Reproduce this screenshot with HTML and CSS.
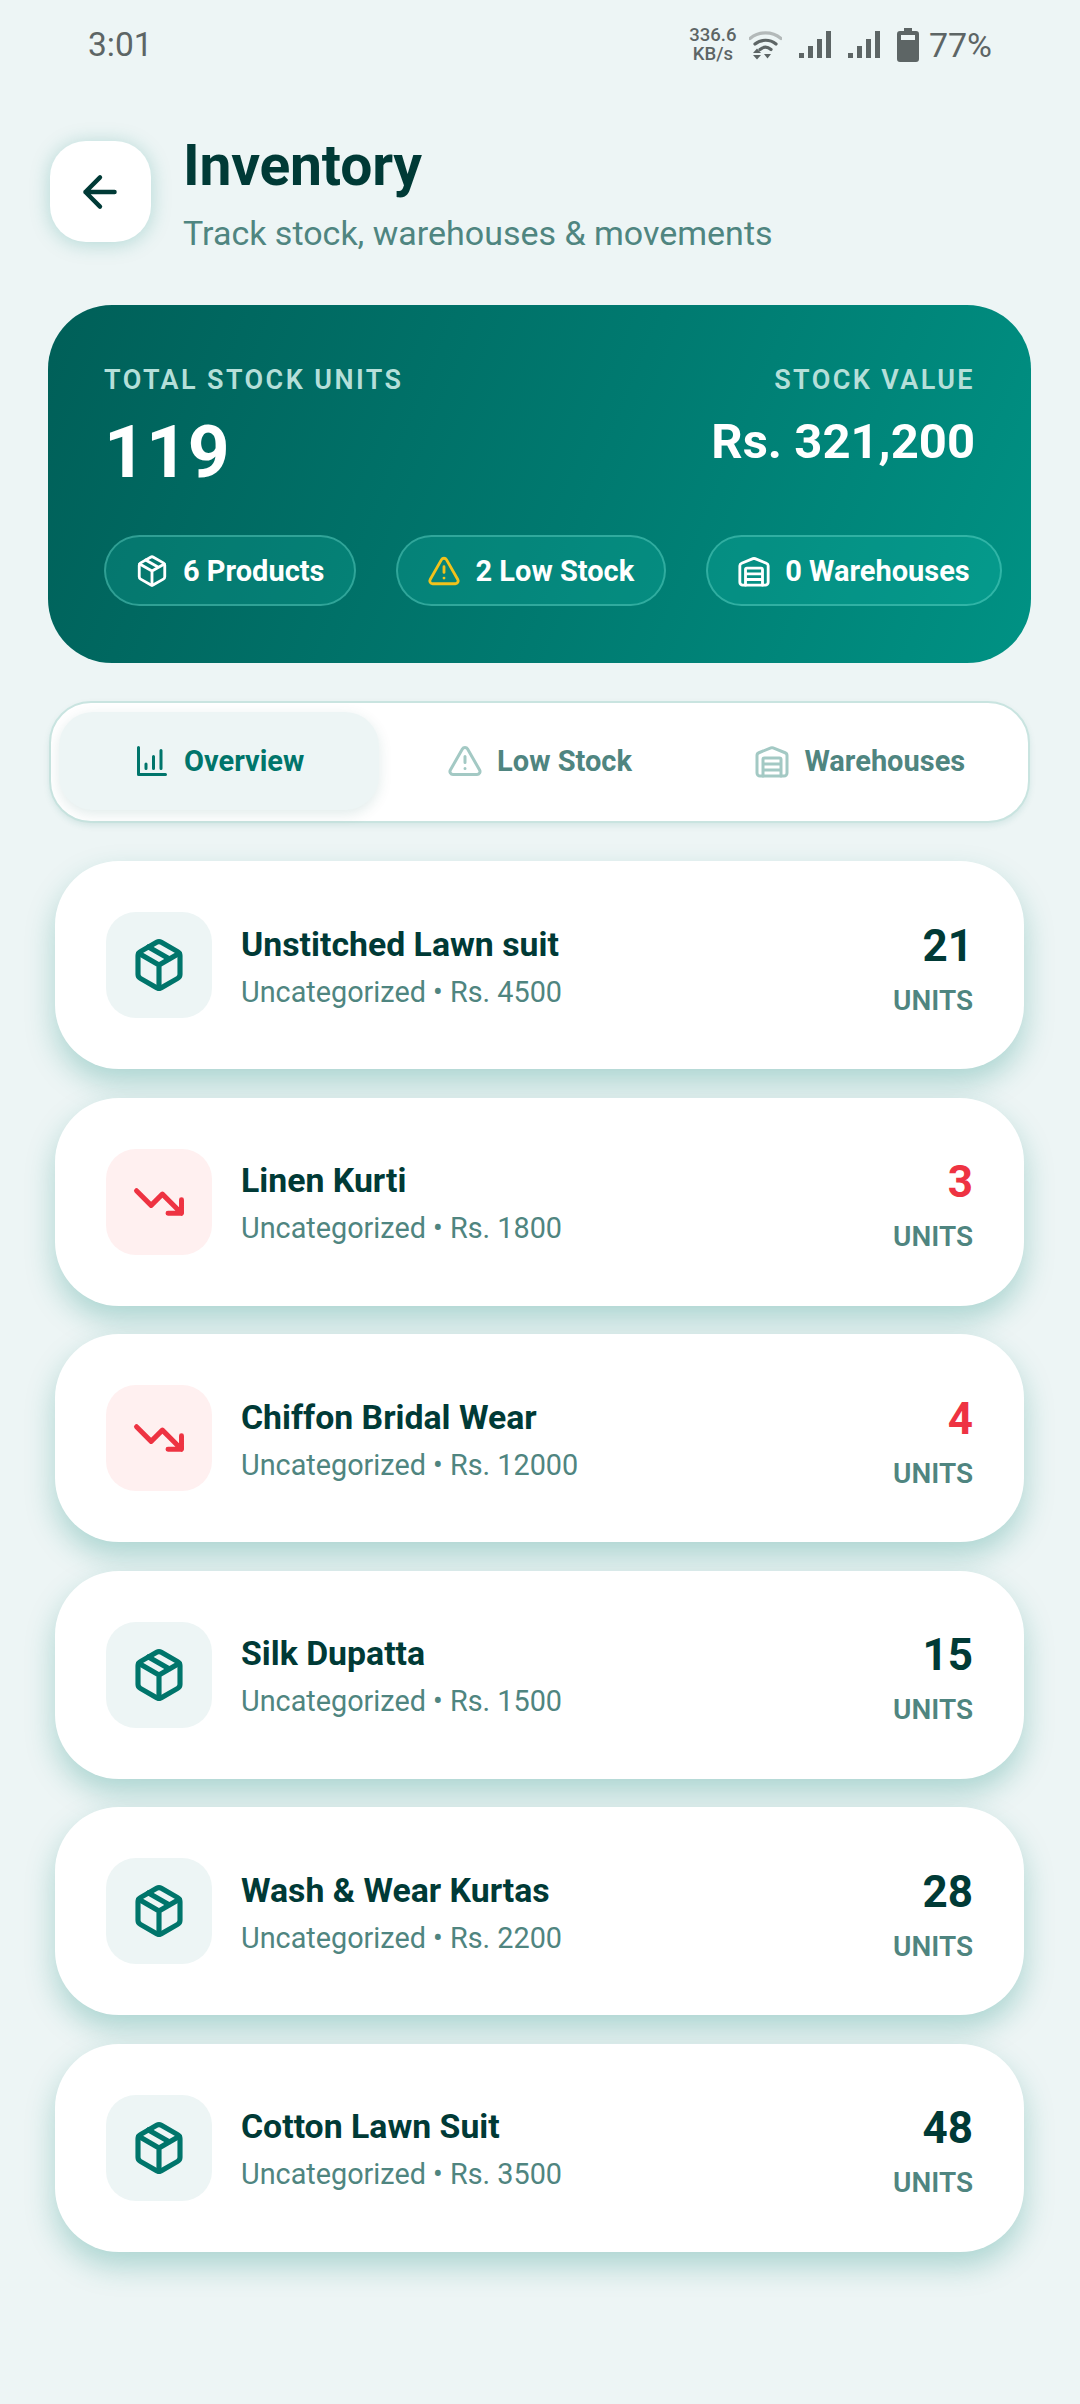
FILE: index.html
```html
<!DOCTYPE html>
<html lang="en">
<head>
<meta charset="utf-8">
<title>Inventory</title>
<link rel="stylesheet" href="styles.css">
</head>
<body>
<svg class="defs" width="0" height="0" aria-hidden="true">
  <symbol id="box" viewBox="0 0 24 24"><path d="M21 8a2 2 0 0 0-1-1.73l-7-4a2 2 0 0 0-2 0l-7 4A2 2 0 0 0 3 8v8a2 2 0 0 0 1 1.73l7 4a2 2 0 0 0 2 0l7-4A2 2 0 0 0 21 16Z"/><path d="m3.3 7 8.7 5 8.7-5M12 22V12M7.5 4.27l9 5.15"/></symbol>
  <symbol id="warn" viewBox="0 0 24 24"><path d="m21.73 18-8-14a2 2 0 0 0-3.48 0l-8 14A2 2 0 0 0 4 21h16a2 2 0 0 0 1.73-3Z"/><path d="M12 9v4M12 17h.01"/></symbol>
  <symbol id="house" viewBox="0 0 24 24"><path d="M22 8.35V20a2 2 0 0 1-2 2H4a2 2 0 0 1-2-2V8.35A2 2 0 0 1 3.26 6.5l8-3.2a2 2 0 0 1 1.48 0l8 3.2A2 2 0 0 1 22 8.35Z"/><path d="M6 18h12M6 14h12M6 22V11a1 1 0 0 1 1-1h10a1 1 0 0 1 1 1v11"/></symbol>
  <symbol id="chart" viewBox="0 0 24 24"><path d="M3 3v18h18M8 17v-3M13 17V9M18 17V5"/></symbol>
  <symbol id="down" viewBox="0 0 24 24"><path d="M22 17l-8.5-8.5-5 5L2 7M16 17h6v-6"/></symbol>
</svg>

<div class="status">
  <span class="time">3:01</span>
  <div class="sys">
    <span class="speed">336.6<br>KB/s</span>
    <svg class="wifi" viewBox="0 0 33 30"><path class="dim" d="M1 8.5C10 1 23 1 32 8.5" /><path d="M6 14c6-5 15-5 21 0M11 19.500c3.500-3 7.500-3 11 0"/><path class="fill" d="M4 23l4-4.500 4 4.500zM4 25h8l-4 4.500zM15 24h7l-3.500 4.500z"/></svg>
    <svg class="bars" viewBox="0 0 32 28"><path class="fill" d="M0 22h5v5H0zM9 15h5v12H9zM18 8h5v19h-5zM27 0h5v27h-5z"/></svg>
    <svg class="bars" viewBox="0 0 32 28"><path class="fill" d="M0 22h5v5H0zM9 15h5v12H9zM18 8h5v19h-5zM27 0h5v27h-5z"/></svg>
    <svg class="batt" viewBox="0 0 22 34"><path class="fill" fill-rule="evenodd" d="M7 0h8v3h4a3 3 0 0 1 3 3v25a3 3 0 0 1-3 3H3a3 3 0 0 1-3-3V6a3 3 0 0 1 3-3h4zM4 7v5h14V7z"/></svg>
    <span class="pct">77%</span>
  </div>
</div>

<main class="page">
  <header class="head">
    <button class="back" type="button" aria-label="Back">
      <svg viewBox="0 0 24 24"><path d="M19 12H5M12 19l-7-7 7-7"/></svg>
    </button>
    <div>
      <h1 class="title">Inventory</h1>
      <p class="subtitle">Track stock, warehouses &amp; movements</p>
    </div>
  </header>

  <section class="hero">
    <div class="hero-top">
      <div>
        <div class="label">TOTAL STOCK UNITS</div>
        <div class="big">119</div>
      </div>
      <div class="right">
        <div class="label">STOCK VALUE</div>
        <div class="value">Rs. 321,200</div>
      </div>
    </div>
    <div class="chips">
      <div class="chip"><svg class="ic-chip"><use href="#box"/></svg>6 Products</div>
      <div class="chip"><svg class="ic-chip yellow"><use href="#warn"/></svg>2 Low Stock</div>
      <div class="chip"><svg class="ic-chip"><use href="#house"/></svg>0 Warehouses</div>
    </div>
  </section>

  <nav class="tabs">
    <div class="tab active"><svg class="ic-tab"><use href="#chart"/></svg>Overview</div>
    <div class="tab"><svg class="ic-tab"><use href="#warn"/></svg>Low Stock</div>
    <div class="tab"><svg class="ic-tab"><use href="#house"/></svg>Warehouses</div>
  </nav>

  <section class="list">
    <article class="card">
      <div class="thumb"><svg class="ic-box"><use href="#box"/></svg></div>
      <div class="info"><div class="name">Unstitched Lawn suit</div><div class="meta">Uncategorized • Rs. 4500</div></div>
      <div class="qty"><div class="num">21</div><div class="units">UNITS</div></div>
    </article>
    <article class="card">
      <div class="thumb low"><svg class="ic-down"><use href="#down"/></svg></div>
      <div class="info"><div class="name">Linen Kurti</div><div class="meta">Uncategorized • Rs. 1800</div></div>
      <div class="qty"><div class="num red">3</div><div class="units">UNITS</div></div>
    </article>
    <article class="card">
      <div class="thumb low"><svg class="ic-down"><use href="#down"/></svg></div>
      <div class="info"><div class="name">Chiffon Bridal Wear</div><div class="meta">Uncategorized • Rs. 12000</div></div>
      <div class="qty"><div class="num red">4</div><div class="units">UNITS</div></div>
    </article>
    <article class="card">
      <div class="thumb"><svg class="ic-box"><use href="#box"/></svg></div>
      <div class="info"><div class="name">Silk Dupatta</div><div class="meta">Uncategorized • Rs. 1500</div></div>
      <div class="qty"><div class="num">15</div><div class="units">UNITS</div></div>
    </article>
    <article class="card">
      <div class="thumb"><svg class="ic-box"><use href="#box"/></svg></div>
      <div class="info"><div class="name">Wash &amp; Wear Kurtas</div><div class="meta">Uncategorized • Rs. 2200</div></div>
      <div class="qty"><div class="num">28</div><div class="units">UNITS</div></div>
    </article>
    <article class="card">
      <div class="thumb"><svg class="ic-box"><use href="#box"/></svg></div>
      <div class="info"><div class="name">Cotton Lawn Suit</div><div class="meta">Uncategorized • Rs. 3500</div></div>
      <div class="qty"><div class="num">48</div><div class="units">UNITS</div></div>
    </article>
  </section>
</main>
</body>
</html>
```

FILE: styles.css
```css
* { box-sizing: border-box; }
html, body { margin: 0; padding: 0; }
body {
  width: 1080px;
  height: 2404px;
  overflow: hidden;
  background: #edf5f5;
  font-family: Roboto, "Noto Sans", sans-serif;
  color: #003a36;
}
.defs { display: block; height: 0; }
svg { fill: none; stroke: currentColor; stroke-linecap: round; stroke-linejoin: round; display: block; flex: none; }

.status { height: 88px; padding: 1px 88px 0; display: flex; align-items: center; justify-content: space-between; color: #5d6565; }
.time { font-size: 33.500px; line-height: 38px; }
.sys { display: flex; align-items: center; }
.speed { width: 50px; font-size: 18.500px; line-height: 19px; font-weight: 500; text-align: center; }
.wifi { width: 33px; height: 30px; margin-left: 11px; stroke-width: 3.200; }
.wifi .dim { stroke: #b3b9b9; }
.fill { fill: #5d6565; stroke: none; }
.bars { width: 32px; height: 28px; margin-left: 17px; }
.batt { width: 22px; height: 34px; margin-left: 17px; }
.pct { font-size: 34px; line-height: 38px; margin-left: 10px; }

.page { padding: 49px 49px 0 48px; }
.head { display: flex; align-items: flex-start; height: 118px; }
.back { width: 101px; height: 101px; margin: 4px 32px 0 2px; padding: 0 2px 0 0; border: 0; border-radius: 36px; background: #fff; color: #003a36; display: flex; align-items: center; justify-content: center; box-shadow: 0 2px 20px rgba(0, 130, 120, .26); }
.back svg { width: 50px; height: 50px; stroke-width: 2.100; }
.title { margin: 0; font-size: 57px; line-height: 58px; font-weight: 700; letter-spacing: -0.2px; }
.subtitle { margin: 16px 0 0; font-size: 34px; line-height: 44px; color: #4f8580; }

.hero { margin-top: 50px; height: 358px; padding: 58px 56px 0; border-radius: 64px; background: linear-gradient(112deg, #005f58 0%, #007a70 55%, #009284 100%); color: #fff; }
.hero-top { display: flex; justify-content: space-between; height: 129px; }
.right { text-align: right; }
.label { font-size: 27px; line-height: 34px; font-weight: 600; letter-spacing: 2.400px; color: #b5dfd9; }
.big { margin-top: 15px; font-size: 73px; line-height: 80px; font-weight: 700; }
.value { margin-top: 17px; font-size: 49px; line-height: 56px; font-weight: 700; }
.chips { display: flex; gap: 40px; margin-top: 43px; width: 920px; }
.chip { height: 71px; padding: 0 30px 0 29px; flex: none; display: flex; align-items: center; gap: 14px; border-radius: 36px; border: 2px solid rgba(130, 235, 222, .35); background: rgba(30, 205, 190, .17); font-size: 29px; font-weight: 700; white-space: nowrap; }
.ic-chip { width: 34px; height: 34px; stroke-width: 2; }
.yellow { color: #f2c21b; }

.tabs { margin: 38px 1px 0 1px; height: 122px; padding: 9px 8px 11px; display: flex; border: 2px solid #c9e4e0; border-radius: 42px; background: #fff; box-shadow: 0 3px 6px rgba(0, 120, 110, .1); }
.tab { flex: 1; display: flex; align-items: center; justify-content: center; gap: 14px; font-size: 29px; font-weight: 700; color: #4f8580; border-radius: 34px; }
.tab.active { color: #00756b; background: #edf5f5; box-shadow: 0 4px 14px rgba(0, 90, 80, .12); }
.ic-tab { width: 36px; height: 36px; stroke-width: 2; color: #a3c9c4; }
.active .ic-tab { color: #00756b; }

.list { margin: 38px 7px 0; display: flex; flex-direction: column; gap: 28.600px; }
.card { height: 208px; padding: 0 51px 0 51px; display: flex; align-items: center; background: #fff; border-radius: 64px; box-shadow: 0 14px 30px rgba(0, 130, 115, .28); }
.thumb { width: 106px; height: 106px; flex: none; border-radius: 30px; background: #edf5f5; display: flex; align-items: center; justify-content: center; color: #00756b; }
.thumb.low { background: #fff0f0; color: #ee3342; }
.ic-box { width: 56px; height: 56px; stroke-width: 2.200; }
.ic-down { width: 54px; height: 54px; stroke-width: 2.200; }
.info { flex: 1; margin: 4px 0 0 29px; }
.name { font-size: 33.800px; line-height: 42px; font-weight: 700; }
.meta { margin-top: 7px; font-size: 28.800px; line-height: 38px; color: #4f8580; }
.qty { text-align: right; margin-top: 9px; }
.num { font-size: 44px; line-height: 50px; font-weight: 700; }
.num.red { color: #ee3342; }
.units { margin-top: 12px; font-size: 28px; line-height: 36px; font-weight: 600; color: #4f8580; }
```
